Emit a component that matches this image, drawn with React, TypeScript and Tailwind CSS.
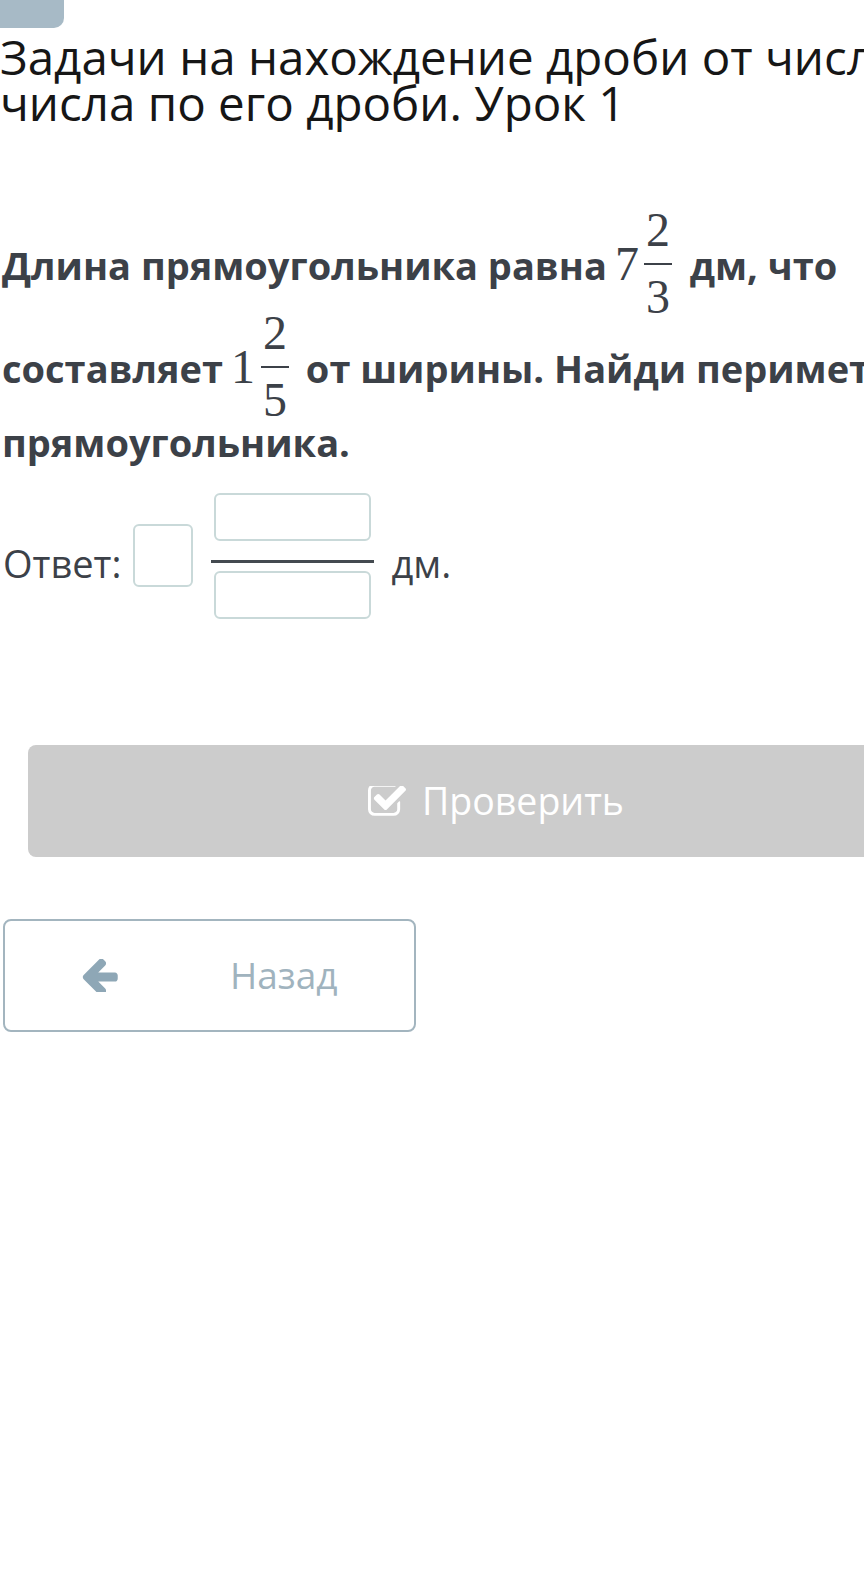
import React from "react";

const sans = { fontFamily: '"Open Sans", "Noto Sans", sans-serif' };
const serif = { fontFamily: '"Liberation Serif", "DejaVu Serif", serif' };

function Frac({ n, d, ml, mr }: { n: string; d: string; ml: string; mr: string }) {
  return (
    <span className={`inline-flex flex-col items-center align-[34px] ${ml} ${mr}`} style={serif}>
      <span className="text-[48px] leading-[36px] font-normal pb-[15px] px-[2px]">{n}</span>
      <span className="h-[2px] w-full bg-[#3c4148]" />
      <span className="text-[48px] leading-[36px] font-normal pt-[14px] px-[2px]">{d}</span>
    </span>
  );
}

function Whole({ v }: { v: string }) {
  return (
    <span className="text-[48px] font-normal ml-[8px]" style={serif}>
      {v}
    </span>
  );
}

function CheckSquareIcon() {
  return (
    <svg width="38" height="30" viewBox="64 230 1664 1310" fill="white">
      <path d="M1472 930v318q0 119-84.5 203.5t-203.5 84.5h-832q-119 0-203.5-84.5t-84.5-203.5v-832q0-119 84.5-203.5t203.5-84.5h832q63 0 117 25 15 7 18 23 3 17-9 29l-49 49q-10 10-23 10-3 0-9-2-23-6-45-6h-832q-66 0-113 47t-47 113v832q0 66 47 113t113 47h832q66 0 113-47t47-113v-254q0-13 9-22l64-64q10-10 23-10 6 0 12 3 20 8 20 29zm231-489l-814 814q-24 24-57 24t-57-24l-430-430q-24-24-24-57t24-57l110-110q24-24 57-24t57 24l263 263 647-647q24-24 57-24t57 24l110 110q24 24 24 57t-24 57z" />
    </svg>
  );
}

function ArrowLeftIcon() {
  return (
    <svg width="37" height="33" viewBox="128 200 1536 1390" fill="#8ea7b6">
      <path d="M1664 896v128q0 53-32.5 90.5t-84.5 37.5h-704l293 294q38 36 38 90t-38 90l-75 76q-37 37-90 37-52 0-91-37l-651-652q-37-37-37-90 0-52 37-91l651-650q38-38 91-38 52 0 90 38l75 74q38 38 38 91t-38 91l-293 293h704q52 0 84.5 37.5t32.5 90.5z" />
    </svg>
  );
}

export default function App() {
  return (
    <div className="w-[864px] h-[1587px] overflow-hidden bg-white" style={sans}>
      <div className="w-[992px]">
        <div className="w-[64px] h-[28px] bg-[#a7bac6] rounded-br-[10px]" />
        <h1 className="mt-[6px] text-[47.5px] leading-[46px] font-normal text-[#161616] whitespace-nowrap">
          Задачи на нахождение дроби от числа и
          <br />
          числа по его дроби. Урок 1
        </h1>
        <p className="mt-[86px] pl-[2px] text-[38px] leading-[48.6px] font-bold text-[#3c4148] whitespace-nowrap">
          Длина прямоугольника равна
          <Whole v="7" />
          <Frac n="2" d="3" ml="ml-[5px]" mr="mr-[8px]" /> дм, что
          <br />
          составляет
          <Whole v="1" />
          <Frac n="2" d="5" ml="ml-[6px]" mr="mr-[7px]" /> от ширины. Найди периметр
          <br />
          прямоугольника.
        </p>
        <div className="mt-[26px] pl-[3px] flex items-center text-[#3c4148]">
          <span className="mt-[14px] text-[38px] leading-[40px]">Ответ:</span>
          <div className="ml-[12px] w-[60px] h-[63px] border-2 border-[#c9d9d9] rounded-[6px]" />
          <div className="ml-[18px] flex flex-col items-center">
            <div className="w-[157px] h-[48px] border-2 border-[#c9d9d9] rounded-[6px]" />
            <div className="mt-[19px] w-[163px] h-[3px] bg-[#444a50]" />
            <div className="mt-[8px] w-[157px] h-[48px] border-2 border-[#c9d9d9] rounded-[6px]" />
          </div>
          <span className="mt-[14px] ml-[17px] text-[38px] leading-[40px]">дм.</span>
        </div>
        <button className="mt-[126px] ml-[28px] w-[936px] h-[112px] bg-[#cccccc] rounded-[8px] flex items-center justify-center gap-[16px] text-white">
          <CheckSquareIcon />
          <span className="text-[37.5px] leading-[40px]">Проверить</span>
        </button>
        <button className="mt-[62px] ml-[3px] w-[413px] h-[113px] border-2 border-[#a3b5bf] rounded-[8px] flex items-center">
          <span className="ml-[76px] flex">
            <ArrowLeftIcon />
          </span>
          <span className="ml-[112px] text-[37px] leading-[40px] text-[#a0b3be]">Назад</span>
        </button>
      </div>
    </div>
  );
}
